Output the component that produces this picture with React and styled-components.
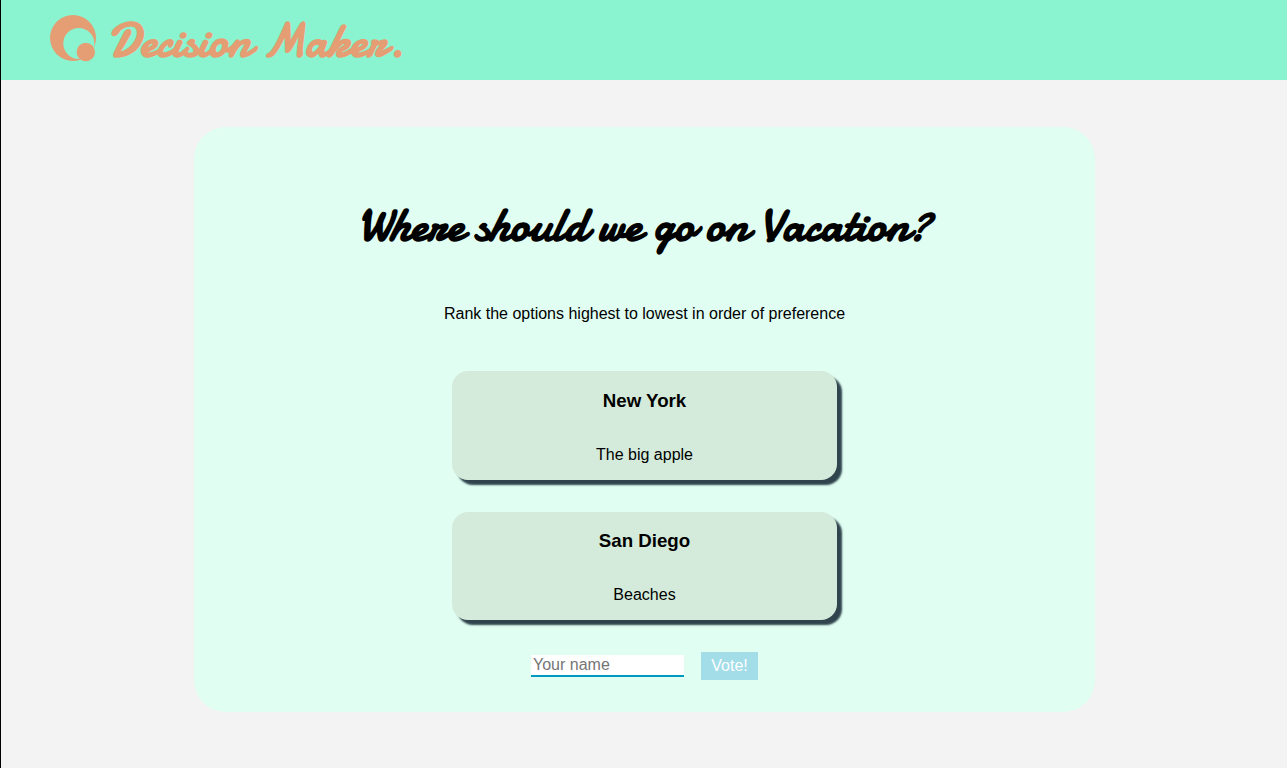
import React from "react";
import styled, { createGlobalStyle } from "styled-components";

const GlobalStyle = createGlobalStyle`
  * { box-sizing: border-box; }
  body {
    margin: 0;
    background: #f3f3f3;
    font-family: "Liberation Sans", Helvetica, Arial, sans-serif;
    font-size: 16px;
    color: #000;
  }
`;

const script = `"Damion", cursive`;

const Page = styled.div`
  min-height: 768px;
  border-left: 1px solid #000;
`;

const Header = styled.header`
  display: flex;
  align-items: center;
  height: 80px;
  padding-left: 48px;
  background: #8af3d0;
  color: #e59e73;
`;

const Logo = styled.svg`
  width: 48px;
  height: 48px;
  margin: -4px 11px 0 0;
`;

const Brand = styled.span`
  padding-top: 2px;
  font: normal 700 48px/48px ${script};
  white-space: nowrap;
`;

const Card = styled.main`
  display: flex;
  flex-direction: column;
  align-items: center;
  width: 901px;
  height: 585px;
  margin: 47px 0 0 193px;
  padding-top: 68px;
  border-radius: 32px;
  background: #e0fef2;
`;

const Title = styled.h1`
  margin: 0;
  font: normal 700 48px/60px ${script};
  white-space: nowrap;
`;

const Hint = styled.p`
  margin: 50px 0 0;
  line-height: 18px;
`;

const Options = styled.div`
  display: grid;
  gap: 32px;
  margin-top: 48px;
`;

const Option = styled.article`
  width: 385px;
  height: ${(p) => p.$height}px;
  padding-top: ${(p) => p.$height - 90}px;
  border-radius: 16px;
  background: #d4ebdb;
  box-shadow: 5px 5px 2px #2f444d;
  text-align: center;
`;

const OptionName = styled.h3`
  margin: 0;
  font-size: 18.72px;
  line-height: 21px;
`;

const OptionText = styled.p`
  margin: 35px 0 0;
  line-height: 18px;
`;

const VoteForm = styled.form`
  display: flex;
  align-items: center;
  gap: 17px;
  margin-top: 32px;
`;

const NameInput = styled.input`
  width: 153px;
  height: 22px;
  padding: 0 2px 1px;
  border: 0;
  border-bottom: 2px solid #009ac1;
  border-radius: 0;
  outline: 0;
  background: #fff;
  font: 16px "Liberation Sans", sans-serif;
  &::placeholder { color: #757575; }
`;

const VoteButton = styled.button`
  width: 57px;
  height: 28px;
  padding: 0;
  border: 0;
  background: #a2dde8;
  color: #fff;
  font: 16px "Liberation Sans", sans-serif;
`;

const options = [
  { name: "New York", text: "The big apple", height: 109 },
  { name: "San Diego", text: "Beaches", height: 108 },
];

export default function App() {
  return (
    <Page>
      <GlobalStyle />
      <Header>
        <Logo viewBox="0 0 48 48" aria-hidden="true">
          <circle cx="24" cy="24" r="23" fill="#e59e73" />
          <circle cx="29.8" cy="29.5" r="15.5" fill="#8af3d0" />
          <circle cx="36.8" cy="38" r="9.2" fill="#e59e73" />
        </Logo>
        <Brand>Decision Maker.</Brand>
      </Header>
      <Card>
        <Title>Where should we go on Vacation?</Title>
        <Hint>Rank the options highest to lowest in order of preference</Hint>
        <Options>
          {options.map((o) => (
            <Option key={o.name} $height={o.height}>
              <OptionName>{o.name}</OptionName>
              <OptionText>{o.text}</OptionText>
            </Option>
          ))}
        </Options>
        <VoteForm onSubmit={(e) => e.preventDefault()}>
          <NameInput placeholder="Your name" />
          <VoteButton type="submit">Vote!</VoteButton>
        </VoteForm>
      </Card>
    </Page>
  );
}
